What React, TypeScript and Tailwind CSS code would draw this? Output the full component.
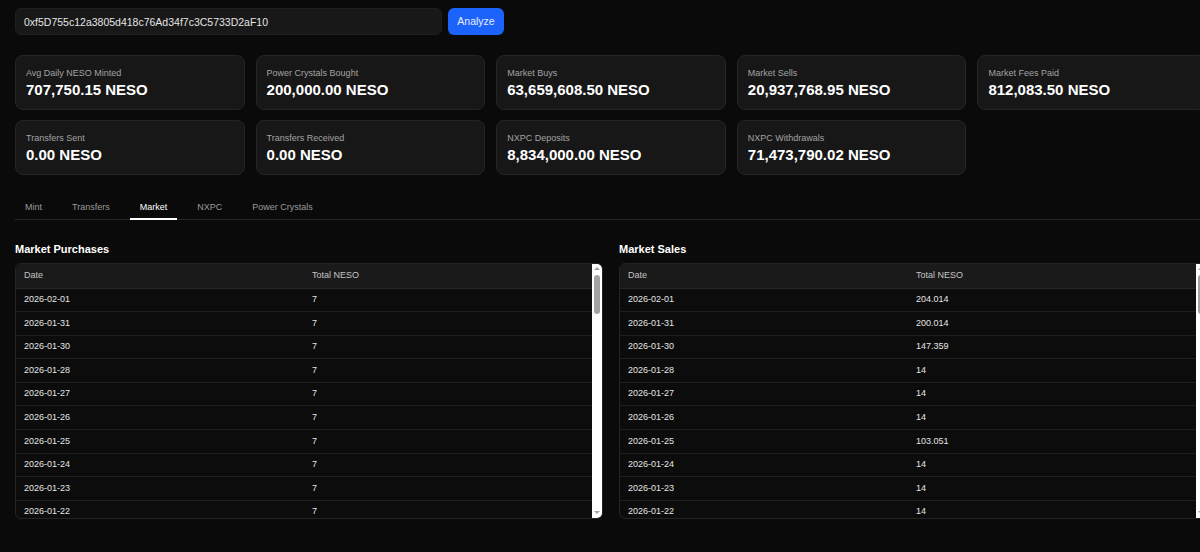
import { useState } from "react";

type Row = { date: string; total: string };

const stats = [
  { label: "Avg Daily NESO Minted", value: "707,750.15 NESO" },
  { label: "Power Crystals Bought", value: "200,000.00 NESO" },
  { label: "Market Buys", value: "63,659,608.50 NESO" },
  { label: "Market Sells", value: "20,937,768.95 NESO" },
  { label: "Market Fees Paid", value: "812,083.50 NESO" },
  { label: "Transfers Sent", value: "0.00 NESO" },
  { label: "Transfers Received", value: "0.00 NESO" },
  { label: "NXPC Deposits", value: "8,834,000.00 NESO" },
  { label: "NXPC Withdrawals", value: "71,473,790.02 NESO" },
];

const tabs = ["Mint", "Transfers", "Market", "NXPC", "Power Crystals"];

const headDates = [
  "2026-02-01",
  "2026-01-31",
  "2026-01-30",
  "2026-01-28",
  "2026-01-27",
  "2026-01-26",
  "2026-01-25",
  "2026-01-24",
  "2026-01-23",
  "2026-01-22",
];

// older days, filled in going back from 2026-01-21
function olderDates(count: number) {
  const out: string[] = [];
  const d = new Date(Date.UTC(2026, 0, 21));
  for (let i = 0; i < count; i++) {
    out.push(d.toISOString().slice(0, 10));
    d.setUTCDate(d.getUTCDate() - (i % 4 === 3 ? 2 : 1));
  }
  return out;
}

const dates = [...headDates, ...olderDates(50)];

const purchases: Row[] = dates.map((date) => ({ date, total: "7" }));

const salesHead = ["204.014", "200.014", "147.359", "14", "14", "14", "103.051", "14", "14", "14"];
const sales: Row[] = dates.map((date, i) => ({
  date,
  total: salesHead[i] ?? (i % 5 === 2 ? "28" : "14"),
}));

function StatCard({ label, value }: { label: string; value: string }) {
  return (
    <div className="h-[55px] rounded-lg border border-[#252525] bg-[#171717] px-[10px] pt-[11px]">
      <div className="text-[9px] leading-[12px] text-[#a3a3a3]">{label}</div>
      <div className="mt-[2px] text-[15px] font-bold leading-[18px] text-white">{value}</div>
    </div>
  );
}

// classic light scrollbar, drawn since the headless page hides native ones
function FakeScrollbar() {
  return (
    <div className="flex w-[10px] shrink-0 flex-col items-center bg-white">
      <div className="mt-[3px] h-0 w-0 border-x-[3px] border-b-[3px] border-x-transparent border-b-[#a3a3a3]" />
      <div className="mt-[5px] h-[39px] w-[6px] rounded-full bg-[#a3a3a3]" />
      <div className="flex-1" />
      <div className="mb-[4px] h-0 w-0 border-x-[3px] border-t-[3px] border-x-transparent border-t-[#a3a3a3]" />
    </div>
  );
}

function DataTable({ title, rows }: { title: string; rows: Row[] }) {
  return (
    <div className="min-w-0">
      <h3 className="mb-[7px] text-[11px] font-bold leading-[13px] text-white">{title}</h3>
      <div className="flex h-[256px] overflow-hidden rounded-md border border-[#232323] bg-[#0c0c0c]">
        <div className="min-w-0 flex-1 overflow-hidden">
          <table className="w-full table-fixed border-collapse text-[9px] text-[#e5e5e5]">
            <thead className="bg-[#1a1a1a]">
              <tr>
                <th className="h-[24px] border-b border-[#262626] px-[8px] text-left font-normal text-[#c4c4c4]">Date</th>
                <th className="h-[24px] border-b border-[#262626] px-[8px] text-left font-normal text-[#c4c4c4]">Total NESO</th>
              </tr>
            </thead>
            <tbody>
              {rows.map((r) => (
                <tr key={r.date}>
                  <td className="h-[23.6px] border-b border-[#1f1f1f] px-[8px] py-0">{r.date}</td>
                  <td className="h-[23.6px] border-b border-[#1f1f1f] px-[8px] py-0">{r.total}</td>
                </tr>
              ))}
            </tbody>
          </table>
        </div>
        <FakeScrollbar />
      </div>
    </div>
  );
}

export default function App() {
  const [address, setAddress] = useState("0xf5D755c12a3805d418c76Ad34f7c3C5733D2aF10");
  const [active, setActive] = useState("Market");

  return (
    <div className="min-h-screen w-full overflow-hidden bg-[#0a0a0a] font-['Liberation_Sans',Arial,sans-serif]">
      <div className="ml-[15px] w-[1192px] pt-[8px] pb-[30px]">
        <div className="flex gap-[6px]">
          <input
            value={address}
            onChange={(e) => setAddress(e.target.value)}
            className="h-[27px] w-[427px] rounded-md border border-[#1f1f1f] bg-[#181818] px-[8px] text-[10.5px] text-[#e5e5e5] outline-none"
          />
          <button className="h-[27px] w-[56px] rounded-md bg-[#1b63fb] text-[10.5px] text-[#e8eeff]">Analyze</button>
        </div>

        <div className="mt-[20px] grid grid-cols-5 gap-x-[11px] gap-y-[10px]">
          {stats.map((s) => (
            <StatCard key={s.label} label={s.label} value={s.value} />
          ))}
        </div>

        <div className="mt-[23px] flex gap-[10px] border-b border-[#262626]">
          {tabs.map((t) => (
            <button
              key={t}
              onClick={() => setActive(t)}
              className={`-mb-px h-[22px] border-b-2 px-[10px] text-[9px] ${
                active === t ? "border-white text-white" : "border-transparent text-[#9a9a9a]"
              }`}
            >
              {t}
            </button>
          ))}
        </div>

        <div className="mt-[23px] grid grid-cols-2 gap-[16px]">
          <DataTable title="Market Purchases" rows={purchases} />
          <DataTable title="Market Sales" rows={sales} />
        </div>
      </div>
    </div>
  );
}
